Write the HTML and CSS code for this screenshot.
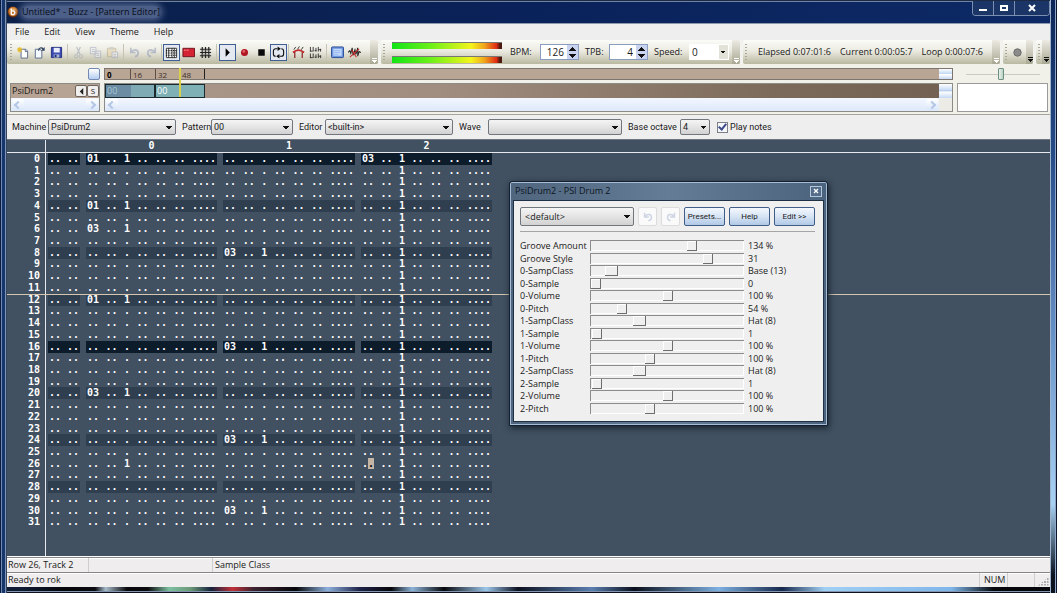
FILE: index.html
```html
<!DOCTYPE html>
<html lang="en">
<head>
<meta charset="utf-8">
<title>Untitled* - Buzz - [Pattern Editor]</title>
<link rel="stylesheet" href="styles.css">
</head>
<body>
<svg class="defs" aria-hidden="true">
  <symbol id="i-undo" viewBox="0 0 14 14"><path d="M3 2v5h5M3.500 6.500C6 3 11 3.500 11 7.500c0 2-1.500 3.500-3.500 4" fill="none" stroke="currentColor" stroke-width="1.800"/></symbol>
  <symbol id="i-redo" viewBox="0 0 14 14"><path d="M11 2v5H6M10.500 6.500C8 3 3 3.500 3 7.500c0 2 1.500 3.500 3.500 4" fill="none" stroke="currentColor" stroke-width="1.800"/></symbol>
</svg>

<header class="titlebar">
  <svg class="app-logo" viewBox="0 0 14 14"><circle cx="7" cy="7" r="6.500" fill="#5b2c0c"/><circle cx="7" cy="6.500" r="5.500" fill="#c8742a"/><path d="M2.500 5a5 4 0 0 1 9 0z" fill="#eab06c"/><path d="M5 3v7M5 6.500c1.500-1.500 4.200-.8 4.200 1.300S6.500 10.800 5 9.300" fill="none" stroke="#fff" stroke-width="1.600"/></svg>
  <h1 class="caption">Untitled* - Buzz - [Pattern Editor]</h1>
  <div class="window-buttons">
    <button aria-label="Minimize"><svg viewBox="0 0 12 10"><path d="M2 6h8v2H2z" fill="#fff"/></svg></button>
    <button aria-label="Maximize"><svg viewBox="0 0 12 10"><path d="M3 3h6v4H3z" fill="none" stroke="#fff" stroke-width="2"/></svg></button>
    <button class="wide" aria-label="Close"><svg viewBox="0 0 12 10"><path d="M3 2l6 6M9 2L3 8" stroke="#fff" stroke-width="2"/></svg></button>
  </div>
</header>

<main class="client">
  <nav class="menubar">
    <button>File</button><button>Edit</button><button>View</button><button>Theme</button><button>Help</button>
  </nav>

  <div class="toolbars">
    <div class="band band-main">
      <span class="grip"></span>
      <button class="tool" aria-label="New"><svg viewBox="0 0 14 14"><path d="M5.500 3.500h5l2 2v7.500h-7z" fill="#fff" stroke="#5a6a8a"/><path d="M10 3.500v2.500h2.500" fill="none" stroke="#5a6a8a"/><path d="M4 1v6M1 4h6M2 2l4 4M6 2L2 6" stroke="#e2bb2c" stroke-width="1.200"/></svg></button>
      <button class="tool" aria-label="Open"><svg viewBox="0 0 14 14"><path d="M2.500 3.500h5l2 2v7.500h-7z" fill="#f4f8ff" stroke="#5a6a8a"/><path d="M6 5c0-3 3-4 5-2" fill="none" stroke="#2c3f5c" stroke-width="1.300"/><path d="M12.500 1v4h-4z" fill="#2c3f5c"/></svg></button>
      <button class="tool" aria-label="Save"><svg viewBox="0 0 14 14"><path d="M1.500 1.500h11v11h-11z" fill="#3d4cb4" stroke="#222c7e"/><path d="M4 2h6.500v5H4z" fill="#e8ecfa"/><path d="M4 9h6v3.500H4z" fill="#a8b2cc"/><path d="M5 9.500h2V12H5z" fill="#222c7e"/></svg></button>
      <span class="sep"></span>
      <button class="tool off" aria-label="Cut"><svg viewBox="0 0 14 14"><path d="M5 1l3.500 8M9 1L5.500 9" stroke="#8f99ad" stroke-width="1.300"/><circle cx="4.500" cy="11" r="1.800" fill="none" stroke="#8f99ad"/><circle cx="9.500" cy="11" r="1.800" fill="none" stroke="#8f99ad"/></svg></button>
      <button class="tool off" aria-label="Copy"><svg viewBox="0 0 14 14"><path d="M1.500 1.500h6v7h-6zM6.500 5.500h6v7h-6z" fill="#f0f2f6" stroke="#8f99b5"/><path d="M8 8h3M8 10h3M3 4h3M3 6h3" stroke="#8f99b5"/></svg></button>
      <button class="tool off" aria-label="Paste"><svg viewBox="0 0 14 14"><path d="M1.500 2.500h9v9h-9z" fill="#e8d2a2" stroke="#a89870"/><path d="M4 1h4v3H4z" fill="#b5b5b5"/><path d="M6.500 6.500h6v6h-6z" fill="#f6f6f8" stroke="#8f99b5"/><path d="M8 9h3M8 11h3" stroke="#8f99b5"/></svg></button>
      <span class="sep"></span>
      <button class="tool off blue" aria-label="Undo"><svg><use href="#i-undo"/></svg></button>
      <button class="tool off blue" aria-label="Redo"><svg><use href="#i-redo"/></svg></button>
      <span class="sep slim"></span>
      <button class="tool on" aria-label="Pattern editor"><svg viewBox="0 0 14 14"><path d="M1.500 2.500h11v10h-11z" fill="#fff" stroke="#333"/><path d="M1 5h12M1 7.500h12M1 10h12" stroke="#222" stroke-width="1.200" stroke-dasharray="1.500 1"/><path d="M4 2v11M7.500 2v11M10 2v11" stroke="#333"/></svg></button>
      <button class="tool" aria-label="Machine view"><svg viewBox="0 0 14 14"><path d="M1 2.500h12.500v9H1z" fill="#d42433" stroke="#6a1018"/><path d="M2 4.500h2M5 4.500h2" stroke="#ff9a9a"/></svg></button>
      <button class="tool" aria-label="Sequence editor"><svg viewBox="0 0 14 14"><path d="M1 3.500h12M1 7h12M1 10.500h12M3.500 1v12M7 1v12M10.500 1v12" stroke="#222" stroke-width="1.300"/><path d="M2 5.200h10M2 9h10" stroke="#777" stroke-width=".8"/></svg></button>
      <span class="sep"></span>
      <button class="tool on" aria-label="Play"><svg viewBox="0 0 14 14"><path d="M5 2.500v9L9.500 7z" fill="#000"/></svg></button>
      <button class="tool" aria-label="Record"><svg viewBox="0 0 14 14"><circle cx="7" cy="7" r="3.800" fill="#b01622"/><circle cx="6.300" cy="5.800" r="1.500" fill="#e4606a"/></svg></button>
      <button class="tool" aria-label="Stop"><svg viewBox="0 0 14 14"><path d="M3.500 3.500h7v7h-7z" fill="#0a0a0a"/></svg></button>
      <button class="tool on" aria-label="Loop"><svg viewBox="0 0 14 14"><path d="M6 3H4Q1.500 3 1.500 5.500v3Q1.500 11 4 11M8 11h2q2.500 0 2.500-2.500v-3Q12.500 3 10 3" fill="none" stroke="#111" stroke-width="1.200"/><path d="M6 .5v5L9.500 3zM8 8.500v5L4.500 11z" fill="#111"/></svg></button>
      <span class="sep slim"></span>
      <button class="tool" aria-label="Bars"><svg viewBox="0 0 14 14"><path d="M3 6v7M11 6v7" stroke="#8a2020" stroke-width="1.300"/><path d="M1 7q6-5 12 0" fill="none" stroke="#c12a2a" stroke-width="1.800"/><path d="M2 4l2-3M6 3.500l2-3M10 4l2-3" stroke="#333"/></svg></button>
      <button class="tool" aria-label="Text view"><svg viewBox="0 0 14 14"><path d="M1.500 1v5M4.500 1v5M7.500 2v4M10 1v5M12.500 3v3M1.500 8v5M4.500 8v5M7.500 9v4M10 8v5M12.500 10v3M1 5.500h3M6 5h2M10 4h3M1 12.500h3M6 12h2M10 11h3" stroke="#333"/></svg></button>
      <span class="sep"></span>
      <button class="tool" aria-label="Full screen"><svg viewBox="0 0 14 14"><rect x=".5" y="1" width="13" height="11.500" rx="1" fill="#6f97df" stroke="#244894"/><path d="M2.500 3h9v7.500h-9z" fill="#c2d9fc"/><path d="M3 5h7M3 7h7M3 9h5" stroke="#8fb0ec" stroke-width=".8"/></svg></button>
      <button class="tool" aria-label="Wave"><svg viewBox="0 0 14 14"><path d="M0 7l2-2 1 3 1.500-6 1 8 2-6 1 5 2-7v9l1.500-5 2 1" fill="none" stroke="#222" stroke-width="1.100"/><path d="M2 12L12 3M4 4l5 8" stroke="#c62a2a" stroke-width="1.100"/></svg></button>
      <span class="overflow"></span>
    </div>

    <div class="band band-tempo">
      <span class="grip"></span>
      <div class="meters"><i></i><i></i></div>
      <label for="bpm">BPM:</label>
      <span class="spin"><input id="bpm" type="text" value="126"><span class="arrows"><button class="up" aria-label="BPM up"></button><button class="down" aria-label="BPM down"></button></span></span>
      <label class="l-tpb" for="tpb">TPB:</label>
      <span class="spin"><input id="tpb" type="text" value="4"><span class="arrows"><button class="up" aria-label="TPB up"></button><button class="down" aria-label="TPB down"></button></span></span>
      <label class="l-speed" for="speed">Speed:</label>
      <select id="speed" class="speed"><option>0</option></select>
      <span class="overflow"></span>
    </div>

    <div class="band band-time">
      <span class="grip"></span>
      <span class="clock">Elapsed 0:07:01:6</span>
      <span class="clock">Current 0:00:05:7</span>
      <span class="clock">Loop 0:00:07:6</span>
      <span class="overflow"></span>
    </div>

    <div class="band band-midi">
      <span class="grip"></span>
      <button class="tool" aria-label="Activity"><svg viewBox="0 0 14 14"><circle cx="7" cy="7" r="4" fill="#8b8b8b" stroke="#686868"/></svg></button>
      <span class="overflow dark"></span>
    </div>
    <div class="band band-last">
      <span class="grip"></span>
      <span class="overflow dark"></span>
    </div>
  </div>

  <section class="sequencer">
    <div class="tracks">
      <div class="tracks-top"><button class="mini" aria-label="Options"></button></div>
      <div class="well">
        <div class="track"><span>PsiDrum2</span><button aria-label="Mute"><svg viewBox="0 0 8 8"><path d="M6 0v8L2 4z" fill="#222"/></svg></button><button>S</button></div>
        <div class="scroll"><button class="left" aria-label="Scroll left"></button><button class="right" aria-label="Scroll right"></button></div>
      </div>
    </div>
    <div class="timeline">
      <div class="ruler">
        <span class="tick first">0</span><span class="tick">16</span><span class="tick">32</span><span class="tick last">48</span>
        <button class="stack" aria-label="Ruler options"></button>
      </div>
      <div class="well">
        <div class="lane">
          <span class="clip played">00</span><span class="clip">00</span>
          <button class="stack" aria-label="Scroll tracks"></button>
        </div>
        <div class="scroll"><button class="left" aria-label="Scroll left"></button><button class="right" aria-label="Scroll right"></button><span class="corner"></span></div>
      </div>
      <span class="playhead"></span>
    </div>
    <div class="side">
      <input class="zoom" type="range" min="0" max="100" value="48" aria-label="Zoom">
      <div class="preview"></div>
    </div>
  </section>

  <form class="machinebar">
    <label class="l-machine" for="machine">Machine</label><select id="machine" class="w-machine"><option>PsiDrum2</option></select>
    <label class="l-pattern" for="pattern">Pattern</label><select id="pattern" class="w-pattern"><option>00</option></select>
    <label class="l-editor" for="editor">Editor</label><select id="editor" class="w-machine"><option>&lt;built-in&gt;</option></select>
    <label class="l-wave" for="wave">Wave</label><select id="wave" class="w-wave"><option></option></select>
    <label class="l-octave" for="octave">Base octave</label><select id="octave" class="w-octave"><option>4</option></select>
    <label class="check"><input type="checkbox" checked>Play notes</label>
  </form>

  <section class="pattern">
    <table class="grid">
      <thead><tr><th></th><th></th><th>0</th><th>1</th><th>2</th></tr></thead>
      <tbody id="rows"></tbody>
    </table>
    <div class="playline"></div>

    <div class="dialog" role="dialog" aria-labelledby="dlg-title">
      <div class="dialog-title"><h2 id="dlg-title">PsiDrum2 - PSI Drum 2</h2><button aria-label="Close"><svg viewBox="0 0 8 8"><path d="M2 2l4 4M6 2L2 6" stroke="#fff" stroke-width="1.300"/></svg></button></div>
      <div class="dialog-body">
        <div class="dialog-tools">
          <select class="preset" aria-label="Preset"><option>&lt;default&gt;</option></select>
          <button class="ghost" aria-label="Undo"><svg><use href="#i-undo"/></svg></button>
          <button class="ghost" aria-label="Redo"><svg><use href="#i-redo"/></svg></button>
          <button class="push">Presets...</button>
          <button class="push">Help</button>
          <button class="push">Edit &gt;&gt;</button>
        </div>
        <div class="params" id="params"></div>
      </div>
    </div>
  </section>

  <footer class="status">
    <div class="status-row"><span class="s-pos">Row 26, Track 2</span><span class="s-blank"></span><span class="s-info">Sample Class</span></div>
    <div class="status-row"><span class="s-info">Ready to rok</span><span class="s-num">NUM</span><span class="s-key"></span><span class="s-grip"></span></div>
  </footer>
</main>
<script src="app.js"></script>
</body>
</html>
```
FILE: styles.css
```css
* { box-sizing: border-box; }
html, body { margin: 0; }
body {
  min-height: 100vh;
  display: flex;
  flex-direction: column;
  padding: 0 7px 6px;
  font: 9px/12px "Open Sans", "Noto Sans", sans-serif;
  color: #1a1a1a;
  background:
    linear-gradient(90deg, #0a1c40 0 1px, #6f8bb5 1px 2px, #17376c 2px 5px, #7d92b4 5px 6px, #33445f 6px) 0 0 / 7px 100% no-repeat,
    linear-gradient(90deg, #9fb2cc 0 1px, transparent 1px 5px, #8fa6c8 5px 6px, #0a1630 6px) 100% 0 / 7px 100% no-repeat,
    linear-gradient(180deg, #0d2558, #244a86 25%, #6e9ace 60%, #a8d2f4 85%, #0a1220 97%) 100% 0 / 7px 100% no-repeat,
    linear-gradient(transparent 4px, #8295ad 4px 5px, #0a1220 5px) 0 100% / 100% 6px no-repeat,
    linear-gradient(90deg, #101c34 0 2%, #04060a 6%, #0a0c12 9%, #a8bccb 10%, #08080c 12%, #0c0c10 14%, #7cc0a0 16%, #6a9a78 18%, #16213c 20%, #c03038 22%, #3c2230 24%, #05060a 28%, #8cb0dc 31%, #20244a 34%, #05060a 37%, #8db4d8 39%, #06070c 42%, #9cc6ea 46%, #0b1020 49%, #5a7fb0 56%, #0a0e1c 60%, #7cb0e0 68%, #16284c 74%, #a0d0f4 78%, #7fb6ea 90%, #05070c 94%) 0 100% / 100% 6px no-repeat,
    linear-gradient(90deg, #0b2048, #0a225a 50%, #0d2a66);
}
button, input, select { font: inherit; color: inherit; margin: 0; padding: 0; border: 0; border-radius: 0; background: none; }
.defs { display: none; }
svg { display: block; }

.titlebar { display: flex; align-items: center; height: 23px; box-shadow: inset 0 1px #1c2a44, inset 0 2px #7083a4; }
.app-logo { width: 12px; height: 12px; }
.caption {
  margin: 0 auto 0 3px; font-size: 9px; font-weight: 400; line-height: 12px;
  color: #080d18; background: #4c5f88; border-radius: 6px; box-shadow: 0 0 6px 3px #4c5f88; white-space: nowrap;
}
.window-buttons { display: flex; align-self: flex-start; margin-top: 1px; border: 1px solid #7c8fb0; border-top: 0; border-radius: 0 0 4px 4px; overflow: hidden; }
.window-buttons button { width: 21px; height: 14px; display: grid; place-items: center; background: #1a3566; border-right: 1px solid #7c8fb0; }
.window-buttons .wide { width: 34px; border-right: 0; }
.window-buttons svg { width: 12px; height: 10px; }

.client { flex: 1; display: flex; flex-direction: column; background: #efeeee; border-top: 1px solid #8d99ad; }
.menubar { display: flex; height: 16px; padding-left: 8px; gap: 15px; }

.toolbars { display: flex; height: 24px; gap: 3px; background: #f2f2ef; }
.band { display: flex; align-items: center; background: linear-gradient(#fbfbf8, #ecebe2 45%, #b9b8a0); border-radius: 2px; }
.grip { align-self: stretch; flex: none; width: 2px; margin: 4px 2px; background: repeating-linear-gradient(#a9a898 0 1px, transparent 1px 3px); }
.band-main .grip { margin: 4px 2px 4px 3px; }
.tool { width: 17px; height: 17px; flex: none; display: grid; place-items: center; }
.tool svg { width: 13px; height: 13px; }
.tool.on { background: #e4e9f1; border: 1px solid #3f5f93; }
.tool.off { opacity: .5; }
.tool.blue { color: #8793b4; }
.sep { width: 1px; height: 16px; margin: 0 2px; background: #c5c4b4; }
.sep.slim { margin: 0 1px; }
.overflow { align-self: stretch; width: 8px; margin-left: auto; background:
  linear-gradient(#fff, #fff) 2px 18px / 5px 1px no-repeat,
  conic-gradient(from 315deg at 50% 100%, #fff 90deg, transparent 0) 2px 20px / 5px 3px no-repeat,
  linear-gradient(#eceae2, #a9a893); border-radius: 0 2px 2px 0; }
.overflow.dark { background:
  linear-gradient(#111, #111) 2px 17px / 5px 1px no-repeat,
  conic-gradient(from 315deg at 50% 100%, #111 90deg, transparent 0) 2px 19px / 5px 3px no-repeat,
  linear-gradient(#eceae2, #a9a893); }
.band-main { width: 371px; }
.band-tempo { width: 359px; }
.band-time { flex: 1; }
.clock { margin-left: 9px; white-space: nowrap; }
.band-midi { width: 30px; }
.band-last { width: 14px; }
.meters { flex: none; display: grid; gap: 7px; width: 110px; margin: 0 8px 0 5px; }
.meters i { height: 7px; border-top: 1px solid #777; background: linear-gradient(90deg, #12e416, #6cf01a 35%, #f4f41c 72%, #f0a51c 84%, #e02c14 95%, #4c1a10 98%); }
.band-tempo label { flex: none; width: 22px; }
.band-tempo .l-tpb { width: 16px; }
.band-tempo .l-speed { width: 28px; }
.spin { display: flex; flex: none; height: 16px; width: 39px; margin: 0 6px 0 8px; border: 1px solid #8a9cc0; background: #fff; font-size: 10px; }
.band-tempo .spin input { width: 26px; padding-right: 3px; text-align: right; }
.arrows { flex: 1; display: grid; }
.arrows button { background: conic-gradient(from 135deg at 50% 0%, #111 90deg, transparent 0) 50% 50% / 7px 4px no-repeat, #c9d2ee; }
.arrows .down { background: conic-gradient(from 315deg at 50% 100%, #111 90deg, transparent 0) 50% 50% / 7px 4px no-repeat, #c9d2ee; }
select {
  appearance: none; height: 16px; padding: 0 14px 0 2px; border: 1px solid #71757c; border-radius: 2px;
  background: conic-gradient(from 315deg at 50% 100%, #111 90deg, transparent 0) right 3px center / 6px 3px no-repeat, linear-gradient(#f5f5f5, #e4e4e4 50%, #d2d2d2);
}
.speed { flex: none; width: 40px; margin-left: 7px; border-color: #fff; border-radius: 0; font-size: 10px;
  background: conic-gradient(from 315deg at 50% 100%, #111 90deg, transparent 0) right 2px center / 6px 3px no-repeat, linear-gradient(#e3e2d8, #e3e2d8) 100% 0 / 9px 100% no-repeat, #fff; }

.sequencer { display: flex; padding: 4px 2px 2px 3px; gap: 4px; background: #f1f1ea; border-bottom: 1px solid #a5a59c; }
.tracks { width: 90px; }
.tracks-top { height: 15px; display: flex; justify-content: flex-end; }
.mini { width: 12px; height: 12px; border: 1px solid #7289b4; border-radius: 2px; background: linear-gradient(#fff, #b4cdf0); }
.well { border: 1px solid #8c8c86; background: #eaf0fc; }
.track, .lane { display: flex; height: 14px; align-items: center; background: #b7a393; }
.track span { flex: 1; padding-left: 1px; }
.track button { width: 12px; height: 12px; display: grid; place-items: center; font-size: 8px; line-height: 8px; border: 1px solid #6f655e; border-radius: 2px; background: #f1efee; }
.track svg { width: 7px; height: 7px; }
.scroll { display: flex; height: 13px; justify-content: space-between; padding: 1px; background: linear-gradient(#f2f6ff, #dfe9fb); }
.scroll button { width: 12px; background: linear-gradient(#fff, #d9e6fa); border-radius: 2px; display: grid; place-items: center; }
.scroll button::after { content: ""; width: 4px; height: 4px; border: solid #b4c7e6; border-width: 0 0 2px 2px; rotate: 45deg; }
.scroll .right { margin-left: auto; }
.scroll .right::after { rotate: 225deg; }
.corner { width: 13px; margin: -1px -1px -1px 1px; background: #ecebe6; }
.timeline { flex: 1; position: relative; }
.ruler { display: flex; height: 12px; margin-bottom: 3px; border: 1px solid #7d7570; background: #b9a594; font-size: 8px; line-height: 11px; color: #3c3029; }
.tick { width: 25px; padding-left: 2px; border-left: 1px solid #5c5048; }
.tick.first { border-left: 0; font-weight: 700; color: #000; }
.tick.last { border-left: 0; border-right: 1px solid #222; }
.stack { width: 13px; margin-left: auto; background: linear-gradient(#fff, #c6daf5 45%, #9cb4da 50%, #fff 55%, #c6daf5); align-self: stretch; }
.lane { background: linear-gradient(90deg, #ab988b, #a08d7f 40%, #7b6959 80%, #726152); }
.clip { width: 50px; height: 14px; padding-left: 1px; color: #fff; font-size: 9px; line-height: 12px; border: 1px solid #1c2a2e; background: #7eb0b6; }
.clip.played { color: #a9c8d6; background: linear-gradient(90deg, #6b8ca2 0 25px, #7eabb4 25px); }
.playhead { position: absolute; left: 75px; top: 0; width: 2px; height: 29px; background: #d8d048; }
.side { width: 91px; display: flex; flex-direction: column; gap: 3px; }
.preview { flex: 1; background: #fff; border: 1px solid #9a9a98; }
input[type=range] { appearance: none; display: block; min-width: 0; width: 100%; }
.zoom { height: 12px; padding: 0 9px; background: linear-gradient(#c9c9c4, #c9c9c4) 50% 50% / 74px 1px no-repeat; }
.zoom::-webkit-slider-thumb { appearance: none; width: 6px; height: 12px; border: 1px solid #6f8f80; border-radius: 1px; background: linear-gradient(90deg, #e9f1ed, #b9d2c4); }

.machinebar { display: flex; align-items: center; gap: 6px; height: 24px; margin: 0; padding-left: 5px; font: 9px/12px Roboto, "Liberation Sans", sans-serif; }
.machinebar select { margin-left: -6px; }
.l-machine { width: 36px; }
.l-pattern { width: 29px; }
.l-editor { width: 26px; }
.l-wave { width: 29px; }
.l-octave { width: 52px; }
.w-machine { width: 128px; }
.w-pattern { width: 82px; }
.w-wave { width: 134px; }
.w-octave { width: 30px; }
.check { display: flex; align-items: center; gap: 2px; margin-left: 1px; }
.check input { appearance: none; width: 11px; height: 11px; border: 1px solid #7c8086; background: #f4f6fa; display: grid; place-items: center; }
.check input:checked::after { content: ""; width: 3px; height: 6px; border: solid #3c4a8c; border-width: 0 2px 2px 0; rotate: 40deg; margin-top: -2px; }

.pattern { flex: 1; position: relative; border-top: 1px solid #6d7680; color: #fff;
  background: linear-gradient(#e6eaee, #e6eaee) 38px 0 / 1px 100% no-repeat, linear-gradient(#e6eaee, #e6eaee) 0 12px / 100% 1px no-repeat, #415161; }
.grid { display: block; font: 700 10px/12px "DejaVu Sans Mono", monospace; }
.grid thead, .grid tbody { display: grid; }
.grid thead { height: 13px; }
.grid tbody { grid-template-rows: repeat(32, 1fr); height: 375px; }
.grid tr { display: grid; grid-template-columns: 35px 32px 131px 132px 131px; gap: 6px; min-height: 0; }
.grid th, .grid td { padding: 0; font-weight: 700; }
.grid tbody th { text-align: right; padding-right: 2px; }
.grid td { display: flex; justify-content: space-between; padding: 0 1px; overflow: hidden; }
.grid .beat td { background: #2f3f4f; }
.grid .bar td { background: #0d1c2b; }
.cursor { color: #000; background: #c4b4a4; }
.playline { position: absolute; left: 0; right: 0; top: 154px; height: 1px; background: #d5c6ae; }

.dialog { position: absolute; left: 502px; top: 41px; width: 319px; color: #1a1a1a; border: 1px solid #14202e; border-radius: 3px 3px 0 0; padding: 0 3px 3px;
  background: linear-gradient(90deg, #50657e, #647c96 50%, #4c637e); box-shadow: inset 0 0 0 1px #a5bdd6, 1px 2px 6px #17222e; }
.dialog-title { display: flex; align-items: center; height: 18px; padding: 0 2px; }
.dialog-title h2 { flex: 1; margin: 0; font-size: 9px; font-weight: 400; color: #0b1522; }
.dialog-title button { width: 12px; height: 11px; display: grid; place-items: center; border: 1px solid #b4c6da; background: #536c8a; }
.dialog-title svg { width: 8px; height: 8px; }
.dialog-body { padding: 6px 8px 6px 6px; background: #efefef; border: 1px solid #1f3145; }
.dialog-tools { display: flex; gap: 4px; padding-bottom: 5px; border-bottom: 1px solid #a5a5a5; }
.dialog-tools .preset { width: 114px; height: 19px; padding-left: 4px; }
.ghost { width: 19px; height: 19px; display: grid; place-items: center; color: #cfd5e4; background: #fafafa; border: 1px solid #dcdcdc; border-radius: 2px; }
.ghost svg { width: 12px; height: 12px; }
.push { flex: 1; height: 19px; font: 8px/12px Roboto, sans-serif; border: 1px solid #3f5d88; border-radius: 2px; background: linear-gradient(#f4f8fd, #d7e4f4 50%, #b0c8e6); }
.params { display: grid; grid-template-rows: repeat(14, 1fr); height: 175px; margin-top: 8px; }
.param { display: grid; grid-template-columns: 70px 154px 1fr; min-height: 0; line-height: 12px; }
.param label { white-space: nowrap; }
.param input { height: 11px; border: solid #8c8c8c; border-width: 1px 0 0 1px; box-shadow: inset -1px -1px #fff; }
.param input::-webkit-slider-thumb { appearance: none; width: 10px; height: 10px; background: #efefef; border: solid #6d6d6d; border-width: 0 1px 1px 0; box-shadow: inset 1px 1px #fff; }
.param .class-slider::-webkit-slider-thumb { width: 13px; }
.param output { padding-left: 4px; white-space: nowrap; }

.status-row { display: flex; height: 15px; border-top: 1px solid #868686; background: #efeded; box-shadow: inset 0 1px #fff; line-height: 14px; }
.status { border-top: 1px solid #fff; }
.status-row span { padding-left: 1px; border-right: 1px solid #cfcdcd; }
.s-pos { width: 82px; }
.s-blank { width: 124px; }
.status-row .s-info { flex: 1; padding-left: 1px; }
.status-row .s-blank + .s-info { padding-left: 2px; border-right: 0; }
.status-row .s-num { width: 28px; padding-left: 4px; }
.s-key { width: 27px; }
.status-row .s-grip { width: 15px; border: 0; background: radial-gradient(circle at 1px 1px, #a9a9a9 1px, transparent 1px) 100% 100% / 3px 3px; clip-path: polygon(90% 30%, 90% 90%, 20% 90%); }
```
FILE: app.js
```js
const EMPTY = ['..', '..', '.', '..', '..', '..', '....'];
const notes = [
  { 0: '01', 4: '01', 6: '03', 12: '01', 20: '03', 26: '..' },
  { 8: '03', 16: '03', 24: '03', 30: '03' },
  { 0: '03' },
];

function cell(tokens) {
  return '<td>' + tokens.map(t => `<span>${t}</span>`).join('') + '</td>';
}

let html = '';
for (let row = 0; row < 32; row++) {
  const cls = row % 16 === 0 ? 'bar' : row % 4 === 0 ? 'beat' : '';
  html += `<tr class="${cls}"><th>${row}</th>` + cell(['..', '..']);
  notes.forEach((track, n) => {
    const tokens = EMPTY.slice();
    if (row in track) tokens[0] = track[row];
    if (row in track || n === 2) tokens[2] = '1';
    if (row === 26 && n === 2) tokens[0] = '.<b class="cursor">.</b>';
    html += cell(tokens);
  });
  html += '</tr>';
}
document.getElementById('rows').innerHTML = html;

const params = [
  ['Groove Amount', 67, '134 %'], ['Groove Style', 78, '31'],
  ['0-SampClass', 10, 'Base (13)'], ['0-Sample', 0, '0'], ['0-Volume', 50, '100 %'], ['0-Pitch', 18, '54 %'],
  ['1-SampClass', 30, 'Hat (8)'], ['1-Sample', 1, '1'], ['1-Volume', 50, '100 %'], ['1-Pitch', 38, '100 %'],
  ['2-SampClass', 30, 'Hat (8)'], ['2-Sample', 1, '1'], ['2-Volume', 50, '100 %'], ['2-Pitch', 38, '100 %'],
];
document.getElementById('params').innerHTML = params.map(([name, value, text], i) => `
  <div class="param"><label for="p${i}">${name}</label>
  <input id="p${i}" type="range" min="0" max="100" value="${value}" class="${name.endsWith('Class') ? 'class-slider' : ''}">
  <output for="p${i}">${text}</output></div>`).join('');
```
